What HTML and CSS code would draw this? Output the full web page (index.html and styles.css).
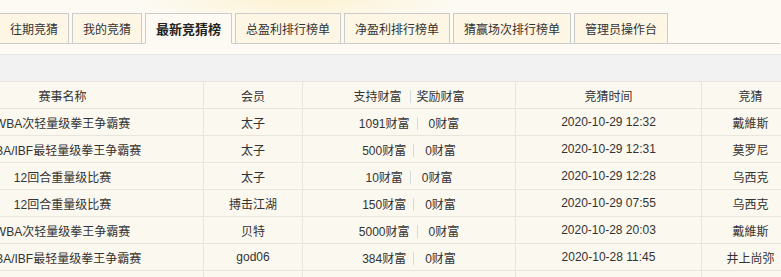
FILE: index.html
```html
<!DOCTYPE html>
<html lang="zh-CN">

<head>
    <meta charset="UTF-8">
    <meta name="viewport" content="width=device-width, initial-scale=1.0">
    <title>最新竞猜榜</title>
    <link rel="stylesheet" href="styles.css">
</head>

<body>
    <div class="page">
        <ul class="tabs">
            <li>往期竞猜</li>
            <li>我的竞猜</li>
            <li class="active">最新竞猜榜</li>
            <li>总盈利排行榜单</li>
            <li>净盈利排行榜单</li>
            <li>猜赢场次排行榜单</li>
            <li>管理员操作台</li>
        </ul>

        <div class="toolbar"></div>

        <div class="list">
            <table>
                <tr class="head">
                    <td class="c1">赛事名称</td>
                    <td class="c2">会员</td>
                    <td class="c3">支持财富<span class="sep head-sep"></span>奖励财富</td>
                    <td class="c4">竞猜时间</td>
                    <td class="c5">竞猜</td>
                </tr>
                <tr>
                    <td>WBA次轻量级拳王争霸赛</td>
                    <td>太子</td>
                    <td>1091财富<span class="sep"></span>0财富</td>
                    <td>2020-10-29 12:32</td>
                    <td>戴維斯</td>
                </tr>
                <tr>
                    <td>WBA/IBF最轻量级拳王争霸赛</td>
                    <td>太子</td>
                    <td>500财富<span class="sep"></span>0财富</td>
                    <td>2020-10-29 12:31</td>
                    <td>莫罗尼</td>
                </tr>
                <tr>
                    <td>12回合重量级比赛</td>
                    <td>太子</td>
                    <td>10财富<span class="sep"></span>0财富</td>
                    <td>2020-10-29 12:28</td>
                    <td>乌西克</td>
                </tr>
                <tr>
                    <td>12回合重量级比赛</td>
                    <td>搏击江湖</td>
                    <td>150财富<span class="sep"></span>0财富</td>
                    <td>2020-10-29 07:55</td>
                    <td>乌西克</td>
                </tr>
                <tr>
                    <td>WBA次轻量级拳王争霸赛</td>
                    <td>贝特</td>
                    <td>5000财富<span class="sep"></span>0财富</td>
                    <td>2020-10-28 20:03</td>
                    <td>戴維斯</td>
                </tr>
                <tr>
                    <td>WBA/IBF最轻量级拳王争霸赛</td>
                    <td>god06</td>
                    <td>384财富<span class="sep"></span>0财富</td>
                    <td>2020-10-28 11:45</td>
                    <td>井上尚弥</td>
                </tr>
                <tr>
                    <td>12回合重量级比赛</td>
                    <td>太子</td>
                    <td>200财富<span class="sep"></span>0财富</td>
                    <td>2020-10-28 09:10</td>
                    <td>乌西克</td>
                </tr>
            </table>
        </div>
    </div>
</body>

</html>
```

FILE: styles.css
```css
*,
::before,
::after {
    box-sizing: border-box;
    margin: 0;
    padding: 0;
}

body {
    background: #fcfaf2;
    font-family: "Liberation Sans", "Noto Sans CJK SC", sans-serif;
    font-size: 12px;
    color: #333;
    overflow: hidden;
}

.page {
    width: 781px;
    height: 277px;
    overflow: hidden;
    background: radial-gradient(ellipse 160px 22px at 300px 0, #fdf1d0, rgba(253, 241, 208, 0)) no-repeat, #fcfaf2;
}

/* tabs */
.tabs {
    display: flex;
    gap: 3px;
    list-style: none;
    width: 781px;
    margin-left: -1px;
    padding-top: 13px;
    border-bottom: 1px solid #cbcbcb;
}

.tabs li {
    height: 31px;
    margin-bottom: -1px;
    padding: 2px 10px 0;
    line-height: 28px;
    white-space: nowrap;
    background: #fdf6e4;
    border: 1px solid #cbcbcb;
}

.tabs li.active {
    font-size: 13px;
    font-weight: bold;
    color: #222;
    background: #fcfaf2;
    border-bottom-color: #fcfaf2;
}

/* grey bar above list */
.toolbar {
    height: 28px;
    margin-top: 10px;
    background: #f2f2f2;
    border-top: 1px solid #e6e6e6;
}

/* list */
.list {
    margin-left: -79px;
    margin-top: -1px;
}

table {
    border-collapse: collapse;
    table-layout: fixed;
    width: 878px;
    background: #fbf8ef;
}

td {
    height: 27px;
    padding: 0;
    text-align: center;
    white-space: nowrap;
    border: 1px solid #e8e5dc;
}

.c1 {
    width: 282px;
}

.c2 {
    width: 99px;
}

.c3 {
    width: 213px;
}

.c4 {
    width: 186px;
}

.c5 {
    width: 98px;
}

.sep {
    display: inline-block;
    width: 1px;
    height: 13px;
    margin: 0 11px 0 7px;
    vertical-align: -2px;
    background: #cfdde3;
}

.head-sep {
    margin: 0 6px 0 8px;
    background: #d4d9dc;
}
```
